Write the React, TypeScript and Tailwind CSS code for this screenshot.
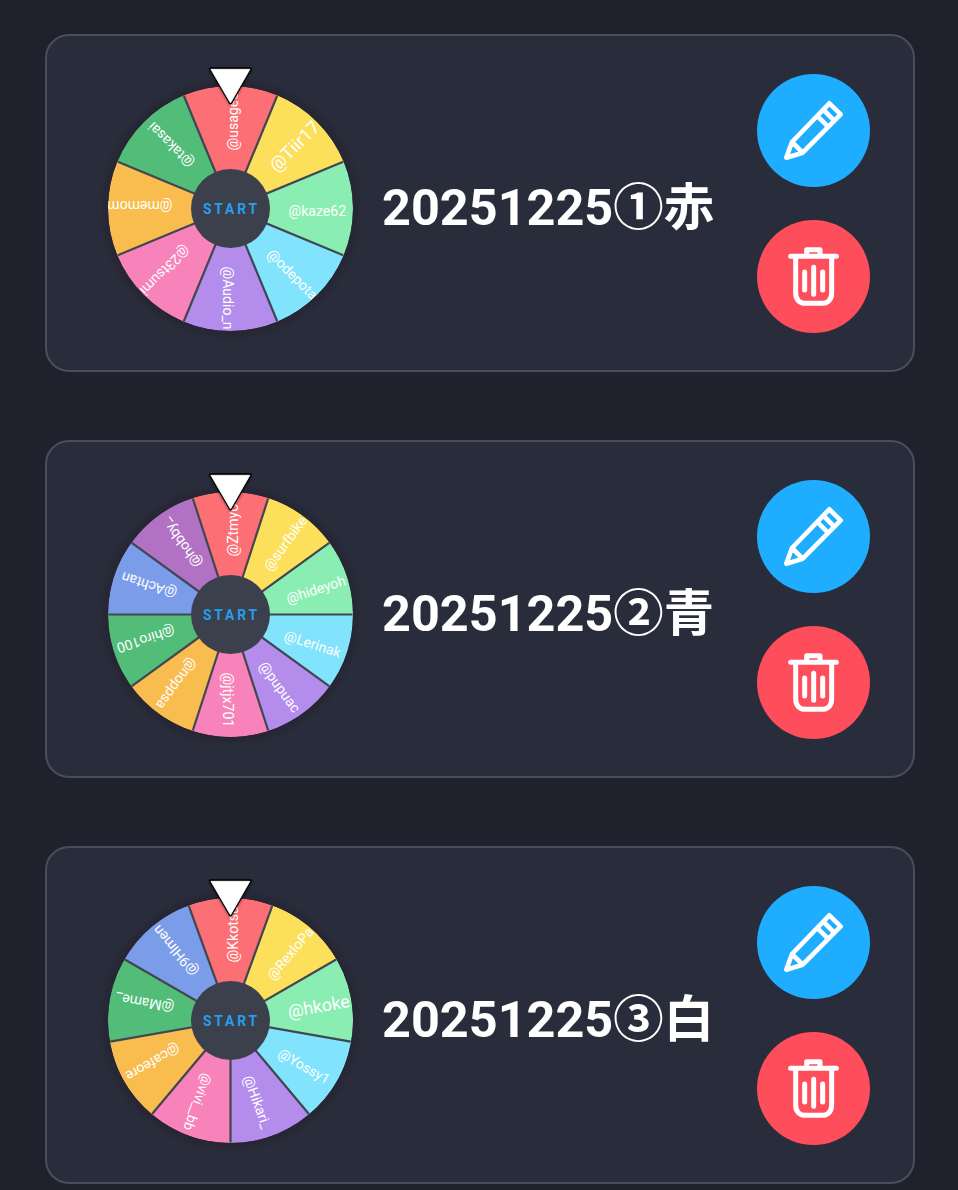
type Slice = { label: string; size: number };
type Wheel = { title: string; slices: Slice[] };

const COLORS = ["#fc6f74", "#fce05c", "#8aeeb3", "#81e3fc", "#b38cec", "#f883ba", "#f9bc4f", "#52bc79", "#7b9ce8", "#b172c3"];
const RADIUS = 122.5;

const s = (label: string, size = 14.1): Slice => ({ label, size });

const WHEELS: Wheel[] = [
  {
    title: "20251225①赤",
    slices: [s("@usagec"), s("@Tiir17", 18.2), s("@kaze62"), s("@odepota"), s("@Audio_n"), s("@23tsumi"), s("@memom"), s("@takasai")],
  },
  {
    title: "20251225②青",
    slices: [s("@Ztmyo"), s("@surfbike"), s("@hideyoh"), s("@Lerinak"), s("@pupuac"), s("@jtjx701"), s("@noppsa"), s("@hiro100"), s("@Achtan"), s("@hobby_")],
  },
  {
    title: "20251225③白",
    slices: [s("@Kkotsu"), s("@RexloPa"), s("@hkoke", 17.6), s("@Yossy1", 13.9), s("@Hikari_"), s("@vivi__bb", 13.6), s("@cafeore"), s("@Mame_"), s("@9Hlmen")],
  },
];

const at = (deg: number, r: number) => {
  const a = (deg * Math.PI) / 180;
  return `${(Math.cos(a) * r).toFixed(2)} ${(Math.sin(a) * r).toFixed(2)}`;
};

function WheelGraphic({ slices, id }: { slices: Slice[]; id: string }) {
  const step = 360 / slices.length;
  return (
    <svg className="mt-6 h-[290px] w-[260px] shrink-0 overflow-visible font-[Roboto,sans-serif]" viewBox="-130.5 -148.5 260 290">
      <defs>
        <clipPath id={id}>
          <circle r={RADIUS} />
        </clipPath>
        <filter id={`${id}-soft`} x="-20%" y="-20%" width="140%" height="140%">
          <feGaussianBlur stdDeviation="1.5" />
        </filter>
      </defs>
      <circle r="128.5" fill="#252834" filter={`url(#${id}-soft)`} />
      <g clipPath={`url(#${id})`}>
        {slices.map((slice, i) => {
          const mid = -90 + i * step;
          return (
            <path
              key={slice.label}
              d={`M0 0L${at(mid - step / 2, RADIUS)}A${RADIUS} ${RADIUS} 0 0 1 ${at(mid + step / 2, RADIUS)}Z`}
              fill={COLORS[i]}
            />
          );
        })}
        {slices.map((slice, i) => (
          <path key={slice.label} d={`M0 0L${at(-90 + (i + 0.5) * step, RADIUS - 0.5)}`} stroke="#404652" strokeWidth="2.2" />
        ))}
        {slices.map((slice, i) => (
          <text key={slice.label} x="58" y="7.5" fontSize={slice.size} fill="#fff" transform={`rotate(${-90 + i * step})`}>
            {slice.label}
          </text>
        ))}
      </g>
      <circle r="39.5" fill="#3c404c" />
      <text x="-27.5" y="5.5" fontSize="13.8" fontWeight="700" letterSpacing="2.85" fill="#259fec">
        START
      </text>
      <path d="M-20 -138.5H20L0 -105Z" fill="#000" opacity="0.45" stroke="#000" strokeWidth="3" strokeLinejoin="round" filter={`url(#${id}-soft)`} />
      <path d="M-20 -139.8H19.8L0 -105.6Z" fill="#fff" stroke="#000" strokeWidth="3" strokeLinejoin="round" />
      <path d="M-19.6 -139.2H19.4L0 -105.6Z" fill="#fff" stroke="#fff" strokeWidth="0.8" strokeLinejoin="round" />
    </svg>
  );
}

function EditButton() {
  return (
    <button aria-label="Edit" className="size-[113px] rounded-full bg-[#1eadff]">
      <svg viewBox="0 0 339 339" className="size-full" fill="none" stroke="#fff" strokeWidth="14" strokeLinejoin="round" strokeLinecap="round">
        <path d="M88 251L105 204L217 88L251 121L137 236ZM105 204L137 236M182 127L213 158M200 108L231 139" />
      </svg>
    </button>
  );
}

function DeleteButton() {
  return (
    <button aria-label="Delete" className="size-[113px] rounded-full bg-[#fe4e5b]">
      <svg viewBox="0 0 339 339" className="size-full" fill="none" stroke="#fff" strokeWidth="15" strokeLinejoin="round" strokeLinecap="round">
        <path d="M101 109H238" />
        <path d="M149 107V89H189V107" />
        <path d="M116 110V218C116 238 126 250 146 250H194C214 250 224 238 224 218V110" />
        <path d="M143 156V210M170 142V223M197 156V210" />
      </svg>
    </button>
  );
}

function WheelCard({ wheel, id }: { wheel: Wheel; id: string }) {
  return (
    <section className="flex h-[338px] shrink-0 rounded-[24px] border-2 border-[#4a4e5c] bg-[#292c3a] pr-[43px] pl-[53px]">
      <WheelGraphic slices={wheel.slices} id={id} />
      <h2 className="ml-[22px] flex-1 self-center pt-[10px] text-[50.4px] leading-[60px] font-bold whitespace-nowrap text-white">{wheel.title}</h2>
      <div className="flex flex-col justify-center gap-[33px]">
        <EditButton />
        <DeleteButton />
      </div>
    </section>
  );
}

export default function App() {
  return (
    <main className="flex h-[1190px] flex-col gap-[68px] overflow-hidden bg-[#1f212d] pt-[34px] pr-[43px] pl-[45px] font-[Roboto,'Noto_Sans_CJK_JP',sans-serif]">
      {WHEELS.map((wheel, i) => (
        <WheelCard key={wheel.title} wheel={wheel} id={`wheel-${i}`} />
      ))}
    </main>
  );
}
